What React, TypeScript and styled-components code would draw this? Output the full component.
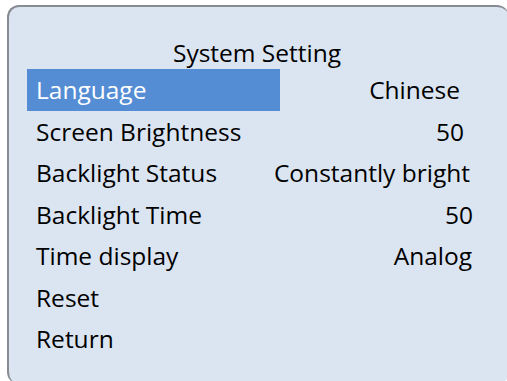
import React from "react";
import styled, { createGlobalStyle } from "styled-components";

const Global = createGlobalStyle`
  html, body { margin: 0; padding: 0; background: #ffffff; overflow: hidden; }
  body { font-family: "Open Sans", "Noto Sans", sans-serif; }
`;

const Panel = styled.div`
  box-sizing: border-box;
  margin: 5px 0 0 7px;
  width: 502px;
  height: 379px;
  background: #dbe5f1;
  border-top: 2px solid #878c93;
  border-left: 2px solid #878c93;
  border-radius: 12px;
  padding: 31px 0 0 18px;
  display: flex;
  flex-direction: column;
  overflow: hidden;
`;

const Title = styled.div`
  height: 31px;
  line-height: 30px;
  font-size: 24.5px;
  color: #000;
  text-align: center;
  padding-right: 4px;
  margin-left: -18px;
`;

const List = styled.div`
  display: flex;
  flex-direction: column;
`;

const Row = styled.div`
  display: grid;
  grid-template-columns: 253px 1fr;
  height: 41.5px;
  font-size: 24.5px;
  color: #000;
`;

const Label = styled.div<{ $active?: boolean }>`
  box-sizing: border-box;
  padding: 2px 0 0 9px;
  line-height: 38.5px;
  background: ${(p) => (p.$active ? "#548dd4" : "transparent")};
  color: ${(p) => (p.$active ? "#ffffff" : "#000000")};
  white-space: nowrap;
`;

const Value = styled.div<{ $inset: number }>`
  box-sizing: border-box;
  min-width: 0;
  display: flex;
  justify-content: flex-end;
  padding: 2px ${(p) => p.$inset}px 0 0;
  line-height: 38.5px;
  white-space: nowrap;
`;

const rows: { label: string; value: string; inset: number; active?: boolean }[] = [
  { label: "Language", value: "Chinese", inset: 49, active: true },
  { label: "Screen Brightness", value: "50", inset: 45 },
  { label: "Backlight Status", value: "Constantly bright", inset: 39 },
  { label: "Backlight Time", value: "50", inset: 36 },
  { label: "Time display", value: "Analog", inset: 37 },
  { label: "Reset", value: "", inset: 37 },
  { label: "Return", value: "", inset: 37 },
];

export default function App() {
  return (
    <>
      <Global />
      <Panel>
        <Title>System Setting</Title>
        <List>
          {rows.map((r) => (
            <Row key={r.label}>
              <Label $active={r.active}>{r.label}</Label>
              <Value $inset={r.inset}>
                <span>{r.value}</span>
              </Value>
            </Row>
          ))}
        </List>
      </Panel>
    </>
  );
}
